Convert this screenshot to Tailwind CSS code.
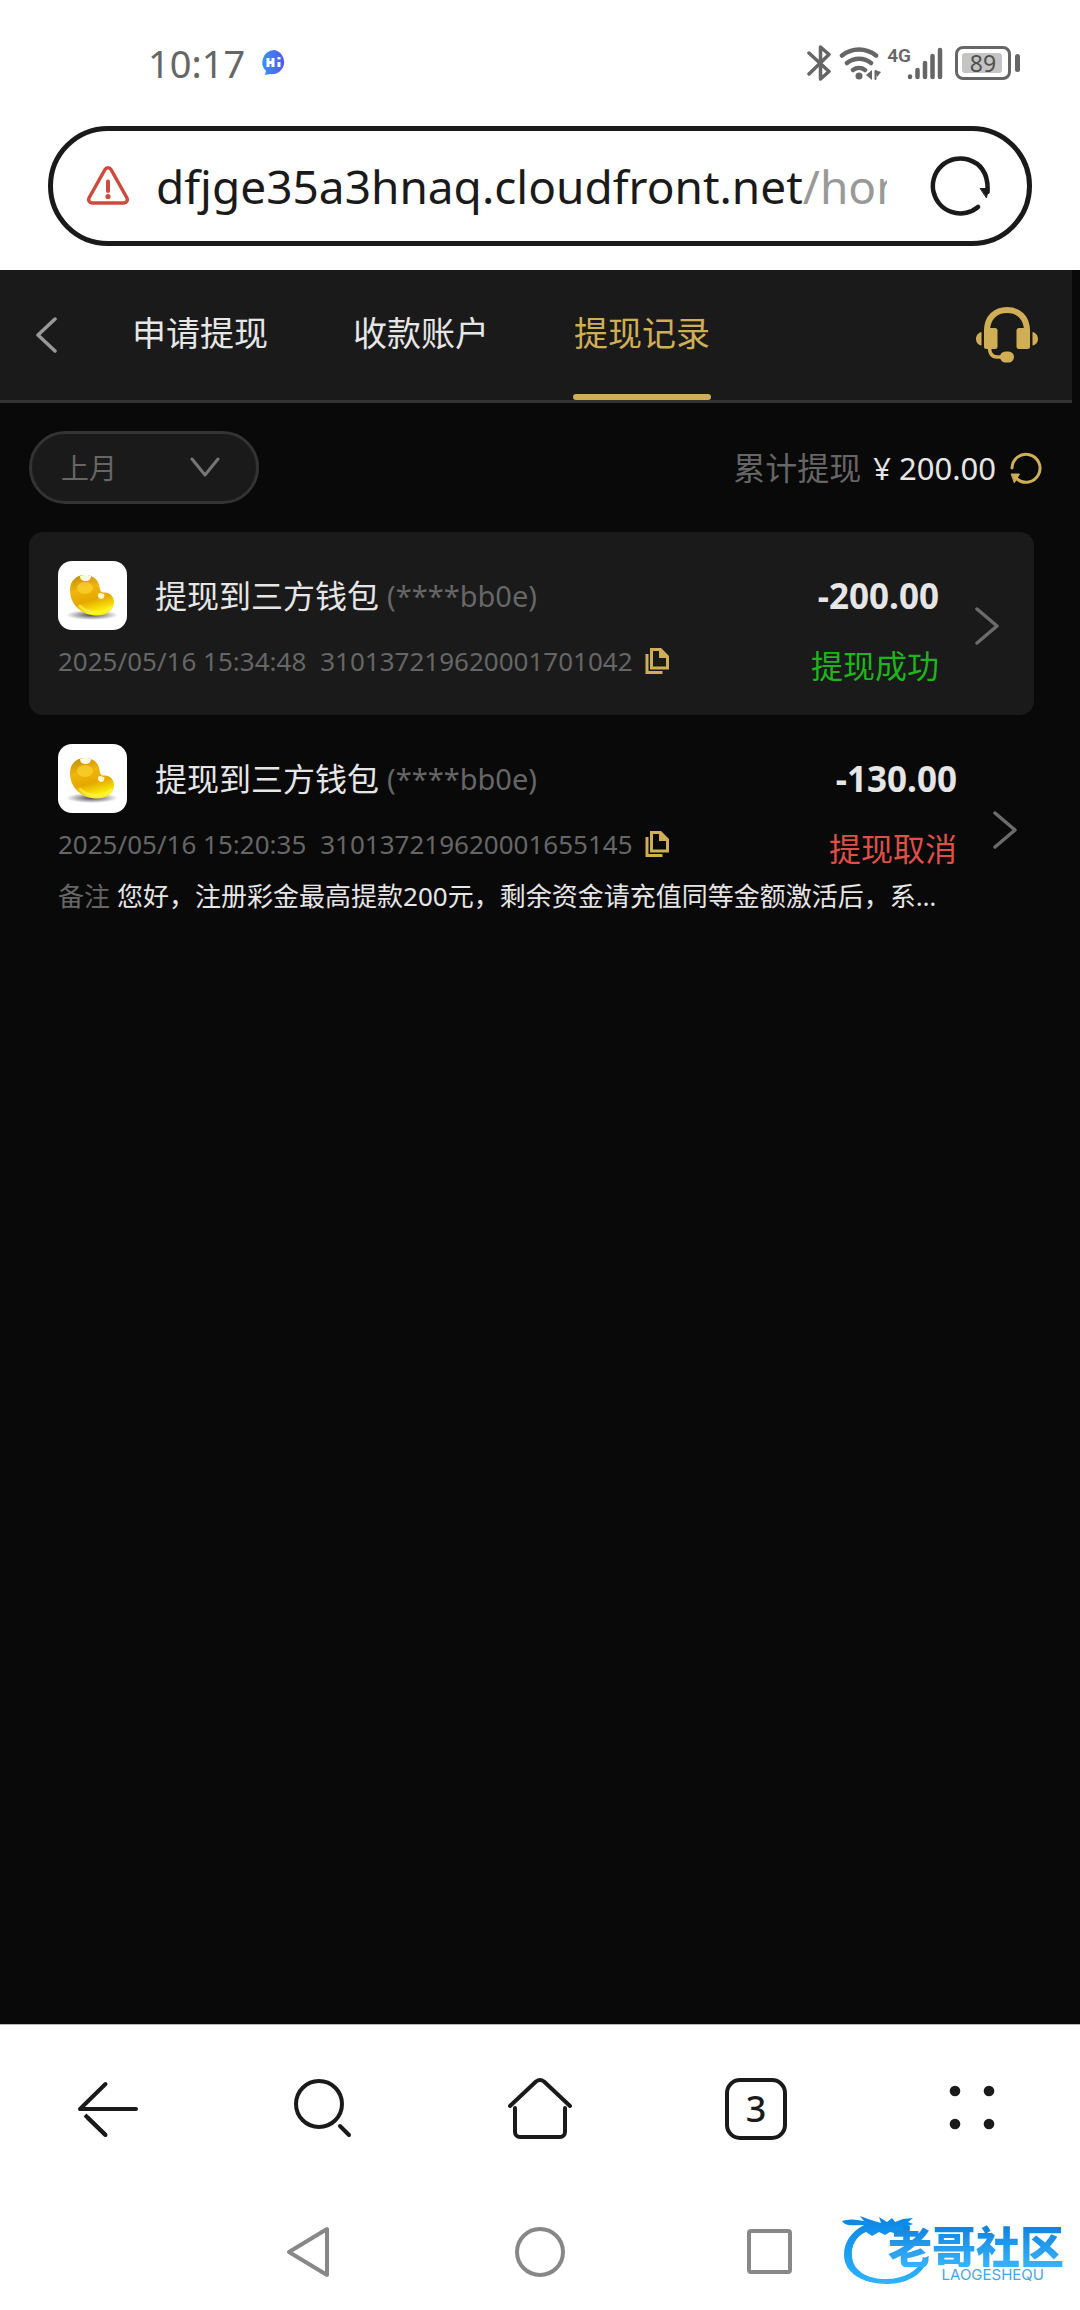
<!DOCTYPE html>
<html lang="zh-CN">
<head>
  <meta charset="UTF-8" />
  <meta name="viewport" content="width=device-width, initial-scale=1.0" />
  <title>提现记录</title>
  <script src="https://cdn.jsdelivr.net/npm/@tailwindcss/browser@4"></script>
</head>
<body class="min-h-screen flex flex-col bg-white font-['Noto_Sans','Noto_Sans_CJK_SC',sans-serif] text-[#1a1a1a]">

  <!-- phone status bar -->
  <div class="h-[126px] pl-[148px] pr-[60px] flex items-center justify-between text-[#666]">
    <div class="flex items-center gap-4">
      <span class="text-[38px] leading-[48px]">10:17</span>
      <svg class="w-[26px] h-[28px]" viewBox="0 0 26 28">
        <defs>
          <linearGradient id="hi" x1="0" y1="0" x2="1" y2="0">
            <stop offset="0" stop-color="#3a93f5" />
            <stop offset="1" stop-color="#5257ee" />
          </linearGradient>
        </defs>
        <path d="M13 1a12 12 0 1 1-4 24l-5 1 1-4A12.300 12.300 0 0 1 13 1z" fill="url(#hi)" />
        <path d="M7 9v9M12 9v9M7 14l5-1M18 13v5M18 8v2.500" stroke="#fff" stroke-width="3" fill="none" />
      </svg>
    </div>
    <div class="flex items-center">
      <svg class="w-6 h-9 mr-2" viewBox="0 0 24 36" fill="none" stroke="currentColor" stroke-width="3.500" stroke-linejoin="round" stroke-linecap="round">
        <path d="M2 8l20 18.500-8.500 7.500V20M2 29L22 9.500 13.500 2v14" />
      </svg>
      <svg class="w-[44px] h-9 mr-1" viewBox="0 0 44 36" fill="none" stroke="currentColor" stroke-width="4.500" stroke-linecap="round">
        <path d="M3 10.500a27 27 0 0 1 34 0M8 18a19 19 0 0 1 24 0M14 25a10 10 0 0 1 12 0" />
        <circle cx="20" cy="31" r="3.500" fill="currentColor" stroke="none" />
        <path d="M33 25v10l-6-5zM36 25v10M36 25l6 2-4 5z" fill="currentColor" stroke="none" />
        <path d="M36.500 26v8" stroke-width="2" />
      </svg>
      <span class="self-start -mr-1 text-[19px] leading-[22px] font-semibold font-['Roboto',sans-serif]">4G</span>
      <svg class="w-9 h-9 mr-3" viewBox="0 0 36 36" fill="none" stroke="currentColor" stroke-width="4.500" stroke-linecap="round">
        <path d="M3 31.500v.5M10.500 25v7M18 18v14M25.500 11v21M33 5v27" />
      </svg>
      <div class="relative w-[56px] h-[34px] rounded-[8px] border-3 border-[#666] p-1">
        <div class="h-full w-[40px] rounded-[3px] bg-[#c4c4c4]"></div>
        <span class="absolute inset-0 text-center text-[23px] leading-[28px] text-[#505050]">89</span>
      </div>
      <span class="ml-1 w-[5px] h-[18px] rounded-[3px] bg-[#666]"></span>
    </div>
  </div>

  <!-- address bar -->
  <div class="pl-12 pr-12 pb-6">
    <div class="h-[120px] pl-[33px] pr-[37px] flex items-center rounded-full border-5 border-[#1a1a1a]">
      <button aria-label="网站不安全">
        <svg class="w-[44px] h-[44px]" viewBox="0 0 44 44" fill="none" stroke="#cf4a3c" stroke-width="3.500" stroke-linejoin="round" stroke-linecap="round">
          <path d="M19 5.500a3.500 3.500 0 0 1 6 0l16 28.500a3.500 3.500 0 0 1-3 5H6a3.500 3.500 0 0 1-3-5z" />
          <path d="M22 17.500v9.500" stroke-width="4" />
          <circle cx="22" cy="32.500" r="2.600" fill="#cf4a3c" stroke="none" />
        </svg>
      </button>
      <a href="#" class="ml-[26px] mr-[43px] flex-1 min-w-0 overflow-hidden whitespace-nowrap text-[46px] leading-[64px]">dfjge35a3hnaq.cloudfront.net<span class="text-[#999]">/home</span></a>
      <button aria-label="刷新页面">
        <svg class="w-[60px] h-[60px]" viewBox="0 0 60 60" fill="none" stroke="#1a1a1a" stroke-width="4.500" stroke-linecap="round">
          <path d="M57.500 36Q59 10 38 3.500A27.500 27.500 0 1 0 48 51" />
          <path d="M50.500 32.500h8l-2 9z" fill="#1a1a1a" stroke-width="1" />
        </svg>
      </button>
    </div>
  </div>

  <!-- site content -->
  <div class="flex-1 bg-[#090909] border-b border-[#b8b8b8] text-[#e6e6e6]">
    <header class="mr-2 h-[133px] pl-[34px] pr-[34px] flex items-center bg-[#1a1a1a] border-b-3 border-[#333]">
      <button aria-label="返回" class="mr-[73px]">
        <svg class="w-6 h-9" viewBox="0 0 24 36" fill="none" stroke="#999" stroke-width="3.500" stroke-linecap="round" stroke-linejoin="round">
          <path d="M21 2L4 18l17 16" />
        </svg>
      </button>
      <nav class="self-stretch flex gap-[83px] text-[34px] text-center">
        <a href="#" class="w-[138px] flex items-center justify-center pb-1">申请提现</a>
        <a href="#" class="w-[138px] flex items-center justify-center pb-1">收款账户</a>
        <a href="#" aria-current="page" class="relative w-[138px] flex items-center justify-center pb-1 text-[#cfae57]">提现记录
          <span class="absolute bottom-0 inset-x-0 h-[6px] rounded-full bg-[#cfae57]"></span>
        </a>
      </nav>
      <button aria-label="客服" class="ml-auto">
        <svg class="w-[62px] h-[56px]" viewBox="0 0 62 56" fill="#cfae57">
          <path d="M11 24C11 10 20 3 31 3s20 7 20 21" fill="none" stroke="#cfae57" stroke-width="6" />
          <rect x="8" y="21" width="13.500" height="21" rx="2.500" />
          <rect x="40.500" y="21" width="13.500" height="21" rx="2.500" />
          <path d="M13.500 40c0 7 3 10 7.500 10h6" fill="none" stroke="#cfae57" stroke-width="3.500" />
          <rect x="24" y="44.500" width="14" height="11" rx="5.500" />
          <path d="M5.500 25v13.500C2 38 0 35 0 32s2-6.500 5.500-7zM56.500 25v13.500C60 38 62 35 62 32s-2-6.500-5.500-7z" />
        </svg>
      </button>
    </header>

    <main class="pl-[29px] pr-7">
      <div class="py-7 flex items-center justify-between pr-[10px]">
        <div class="relative">
          <select aria-label="月份" class="appearance-none w-[230px] h-[73px] pl-[29px] rounded-full border-3 border-[#333] bg-[#1a1a1a] text-[28px] text-[#666]">
            <option>上月</option>
          </select>
          <svg class="absolute right-[39px] top-[26px] w-[30px] h-[21px] pointer-events-none" viewBox="0 0 30 21" fill="none" stroke="#757575" stroke-width="3" stroke-linecap="round" stroke-linejoin="round">
            <path d="M2 2l13 16L28 2" />
          </svg>
        </div>
        <div class="flex items-center text-[31px] leading-[44px]">
          <span class="text-[32px] text-[#666]">累计提现</span>
          <span class="ml-3">¥</span>
          <span class="ml-2">200.00</span>
          <button aria-label="刷新" class="ml-[14px]">
            <svg class="w-8 h-8" viewBox="0 0 32 32" fill="none" stroke="#cfae57" stroke-width="3" stroke-linecap="round">
              <path d="M2 16A14 14 0 1 1 7 27" />
              <path d="M1.500 22h8l-5 8.500z" fill="#cfae57" stroke-width="1" />
            </svg>
          </button>
        </div>
      </div>

      <svg class="absolute w-0 h-0" aria-hidden="true">
        <defs>
          <linearGradient id="gold" x1="0" y1="0" x2="0.300" y2="1">
            <stop offset="0" stop-color="#b98a08" />
            <stop offset="0.400" stop-color="#f0b60c" />
            <stop offset="0.700" stop-color="#e5a800" />
            <stop offset="1" stop-color="#fdf00c" />
          </linearGradient>
          <radialGradient id="shade">
            <stop offset="0" stop-color="#4a4450" />
            <stop offset="1" stop-color="#4a4450" stop-opacity="0" />
          </radialGradient>
        </defs>
        <symbol id="bean" viewBox="0 0 69 69">
          <ellipse cx="34" cy="54" rx="26" ry="5" fill="url(#shade)" />
          <path d="M12 29c0-9 6-15 15-15s14 6 14.500 12c.5 4 2 6 5 5.500 5-.5 9.500 4 9.500 9.500 0 8-7 13.500-17 13.500C24 54.500 12 44 12 29z" fill="url(#gold)" />
          <path d="M22 15c3-1.500 8-1.500 11 0 0 3-2 5-5.500 5S22 18 22 15z" fill="#fffbe0" />
          <ellipse cx="27" cy="27" rx="8" ry="6" fill="#ffd83a" opacity="0.600" />
          <path d="M42 32c-3 0-3 5 1 6 3 0 4-3 3-5z" fill="#fff8d0" />
          <path d="M22 45c8 8 23 9 31 1" stroke="#fff350" stroke-width="3" fill="none" stroke-linecap="round" opacity="0.600" />
        </symbol>
        <symbol id="copy" viewBox="0 0 24 28">
          <path d="M6.500 2.500h9l7 7V21h-16z" fill="none" stroke="#cfae57" stroke-width="3" />
          <path d="M14 2l9 9h-9z" fill="#cfae57" />
          <path d="M2 7v18.500h15.500" fill="none" stroke="#cfae57" stroke-width="3" />
        </symbol>
        <symbol id="next" viewBox="0 0 24 38">
          <path d="M2 2l20 17L2 36" fill="none" stroke="#6b6b6b" stroke-width="3.500" stroke-linecap="round" stroke-linejoin="round" />
        </symbol>
      </svg>

      <article class="mr-[18px] pt-[29px] pb-[25px] pl-[29px] pr-[35px] flex items-center rounded-[14px] bg-[#1a1a1a]">
        <div class="flex-1 min-w-0">
          <div class="flex justify-between">
            <div>
              <div class="flex items-center">
                <svg class="w-[69px] h-[69px] rounded-[14px] bg-white"><use href="#bean" /></svg>
                <h2 class="ml-7 text-[32px] leading-[44px]">提现到三方钱包</h2>
                <span class="ml-2 text-[29px] leading-[44px] text-[#666]">(****bb0e)</span>
              </div>
              <div class="mt-3 flex items-center text-[26px] leading-[38px] text-[#666]">
                <time>2025/05/16 15:34:48</time>
                <span class="ml-[14px]">310137219620001701042</span>
                <button aria-label="复制订单号" class="ml-3"><svg class="w-6 h-7"><use href="#copy" /></svg></button>
              </div>
            </div>
            <div class="text-right">
              <p class="text-[35px] leading-[69px] font-bold">-200.00</p>
              <p class="mt-3 text-[32px] leading-[48px] text-[#1cb51c]">提现成功</p>
            </div>
          </div>
        </div>
        <a href="#" aria-label="详情" class="ml-9"><svg class="w-6 h-[38px]"><use href="#next" /></svg></a>
      </article>

      <article class="pt-[29px] pb-[25px] pl-[29px] pr-[35px] flex items-center">
        <div class="flex-1 min-w-0">
          <div class="flex justify-between">
            <div>
              <div class="flex items-center">
                <svg class="w-[69px] h-[69px] rounded-[14px] bg-white"><use href="#bean" /></svg>
                <h2 class="ml-7 text-[32px] leading-[44px]">提现到三方钱包</h2>
                <span class="ml-2 text-[29px] leading-[44px] text-[#666]">(****bb0e)</span>
              </div>
              <div class="mt-3 flex items-center text-[26px] leading-[38px] text-[#666]">
                <time>2025/05/16 15:20:35</time>
                <span class="ml-[14px]">310137219620001655145</span>
                <button aria-label="复制订单号" class="ml-3"><svg class="w-6 h-7"><use href="#copy" /></svg></button>
              </div>
            </div>
            <div class="text-right">
              <p class="text-[35px] leading-[69px] font-bold">-130.00</p>
              <p class="mt-3 text-[32px] leading-[48px] text-[#dd5046]">提现取消</p>
            </div>
          </div>
          <p class="mt-1 truncate text-[26px] leading-[38px]"><span class="mr-[7px] text-[#666]">备注</span>您好，注册彩金最高提款200元，剩余资金请充值同等金额激活后，系…</p>
        </div>
        <a href="#" aria-label="详情" class="ml-9"><svg class="w-6 h-[38px]"><use href="#next" /></svg></a>
      </article>
    </main>
  </div>

  <!-- browser toolbar -->
  <nav class="h-[168px] grid grid-cols-5 place-items-center">
    <button aria-label="后退">
      <svg class="w-16 h-16" viewBox="0 0 64 64" fill="none" stroke="#1a1a1a" stroke-width="4" stroke-linecap="round">
        <path d="M29.500 7L4 32h56" stroke-linejoin="round" />
        <path d="M9 38l20.500 20" stroke-linecap="butt" />
        <path d="M12 41l17.500 17" />
      </svg>
    </button>
    <button aria-label="搜索">
      <svg class="w-16 h-16" viewBox="0 0 64 64" fill="none" stroke="#1a1a1a" stroke-width="4" stroke-linecap="round">
        <circle cx="27" cy="27" r="23" />
        <path d="M48 49l9 9" />
      </svg>
    </button>
    <button aria-label="主页">
      <svg class="w-16 h-16" viewBox="0 0 64 64" fill="none" stroke="#1a1a1a" stroke-width="4" stroke-linecap="round" stroke-linejoin="round">
        <path d="M2 29L28 4.500q4-3 8 0L62 29" />
        <path d="M7 31v24a5 5 0 0 0 5 5h40a5 5 0 0 0 5-5V31" />
      </svg>
    </button>
    <button aria-label="标签页" class="size-[62px] rounded-[15px] border-4 border-[#1a1a1a] text-[36px] leading-[52px] font-medium">3</button>
    <button aria-label="菜单">
      <svg class="w-16 h-16" viewBox="0 0 64 64" fill="#1a1a1a">
        <circle cx="15" cy="14" r="5.300" />
        <circle cx="49" cy="14" r="5.300" />
        <circle cx="15" cy="47" r="5.300" />
        <circle cx="49" cy="47" r="5.300" />
      </svg>
    </button>
  </nav>

  <!-- system navigation, with the community mark over its right end -->
  <nav class="relative h-[117px] flex items-center justify-center gap-[180px]">
    <button aria-label="系统返回">
      <svg class="w-[50px] h-[52px]" viewBox="0 0 50 52" fill="none" stroke="#888" stroke-width="4" stroke-linejoin="round">
        <path d="M4 26L42 3v46z" />
      </svg>
    </button>
    <button aria-label="系统主页" class="size-[50px] rounded-full border-4 border-[#888]"></button>
    <button aria-label="最近任务">
      <svg class="size-[50px]" viewBox="0 0 50 50" fill="none" stroke="#888" stroke-width="4">
        <rect x="4" y="4" width="41" height="41" rx="2" />
      </svg>
    </button>

    <div class="absolute right-[16px] top-[20px] w-[222px] h-[76px] font-['Noto_Sans_CJK_SC',sans-serif]">
      <svg class="absolute inset-0 w-full h-full" viewBox="0 0 222 76">
        <defs>
          <linearGradient id="sea" x1="0" y1="0" x2="0" y2="1">
            <stop offset="0" stop-color="#0b86e4" />
            <stop offset="1" stop-color="#2cb4fb" />
          </linearGradient>
        </defs>
        <path d="M0 8q8-3 22 0L18 3l11 4 10 3-2-6 8 5 5-4 3 4 8-3 10-1-5 4 5 2-8 3 5 5-10-1 2 4-12-3-5 3-6-3-7 4-6-4c-10 4-15 14-14 24 1 15 15 23 34 23 18 0 32-8 38-21l5-2c-4 17-20 28-42 28C21 71 2 60 2 42 2 29 9 19 22 12 12 12 4 14 0 8z" fill="url(#sea)" />
      </svg>
      <span class="absolute right-0 bottom-[22px] bg-linear-to-b from-[#0b7fdc] to-[#38b4fa] bg-clip-text text-transparent text-[44px] leading-[44px] font-black whitespace-nowrap">老哥社区</span>
      <span class="absolute right-[20px] bottom-[7px] text-[15px] leading-[14px] font-['Inter',sans-serif] text-[#4aa5e6]">LAOGESHEQU</span>
    </div>
  </nav>
</body>
</html>
